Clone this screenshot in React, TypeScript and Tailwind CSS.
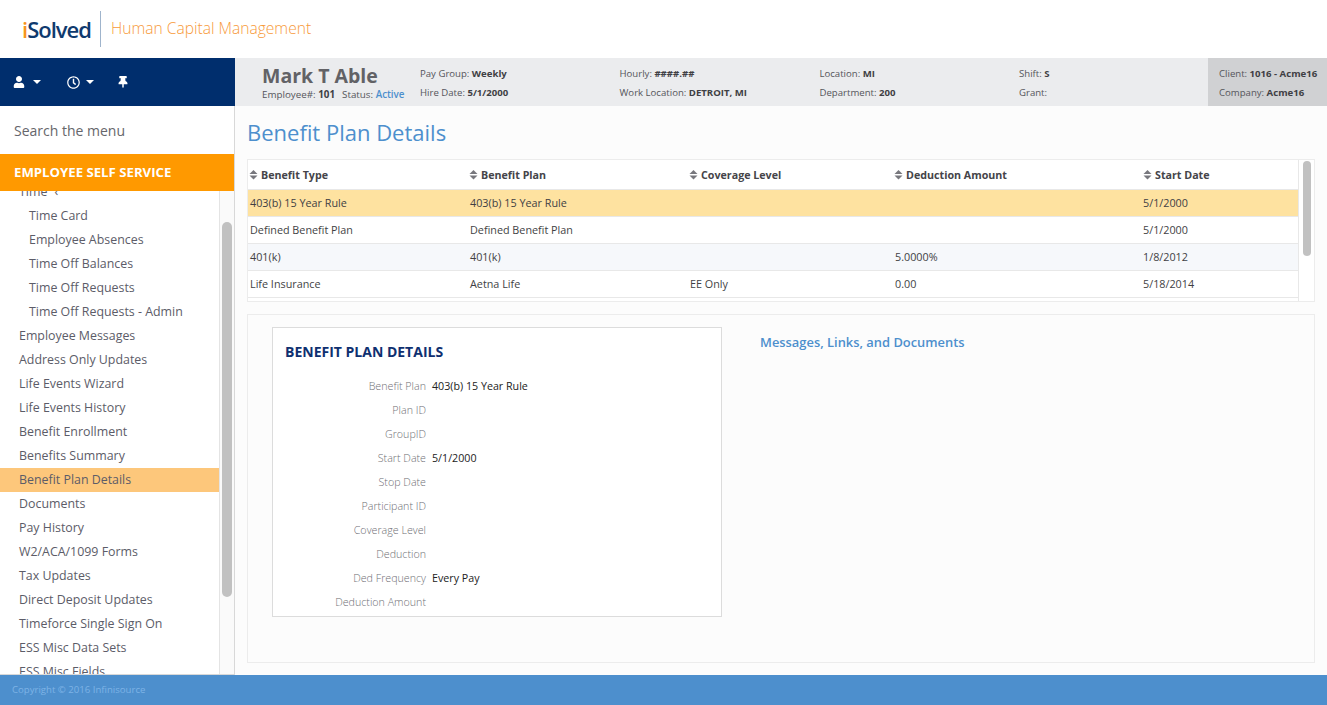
import { FaUser, FaRegClock, FaThumbtack } from "react-icons/fa";

function Caret() {
  return <span className="inline-block w-0 h-0 border-x-[4px] border-x-transparent border-t-[4px] border-t-white" />;
}

function Sort() {
  return (
    <svg width="9" height="10" viewBox="0 0 9 10" className="shrink-0 mr-[3px]">
      <path d="M4.5 0 L8.5 4 H0.5 Z M0.5 5.6 H8.5 L4.5 9.6 Z" fill="#77777d" />
    </svg>
  );
}

function Info({ label, value, className = "" }: { label: string; value?: string; className?: string }) {
  return (
    <div className={"text-[9.6px] leading-[19px] text-[#55555b] " + className}>
      {label}: <b className="font-bold text-[#3f3f44]">{value}</b>
    </div>
  );
}

const menu = [
  "Time Card",
  "Employee Absences",
  "Time Off Balances",
  "Time Off Requests",
  "Time Off Requests - Admin",
];
const menu2 = [
  "Employee Messages",
  "Address Only Updates",
  "Life Events Wizard",
  "Life Events History",
  "Benefit Enrollment",
  "Benefits Summary",
  "Benefit Plan Details",
  "Documents",
  "Pay History",
  "W2/ACA/1099 Forms",
  "Tax Updates",
  "Direct Deposit Updates",
  "Timeforce Single Sign On",
  "ESS Misc Data Sets",
  "ESS Misc Fields",
];

const cols = ["w-[220px]", "w-[220px]", "w-[205px]", "w-[248px]", "flex-1"];
const headers = ["Benefit Type", "Benefit Plan", "Coverage Level", "Deduction Amount", "Start Date"];
const rows = [
  { c: ["403(b) 15 Year Rule", "403(b) 15 Year Rule", "", "", "5/1/2000"], bg: "bg-[#fee2a0]" },
  { c: ["Defined Benefit Plan", "Defined Benefit Plan", "", "", "5/1/2000"], bg: "bg-white" },
  { c: ["401(k)", "401(k)", "", "5.0000%", "1/8/2012"], bg: "bg-[#f6f8fb]" },
  { c: ["Life Insurance", "Aetna Life", "EE Only", "0.00", "5/18/2014"], bg: "bg-white" },
];
const details = [
  ["Benefit Plan", "403(b) 15 Year Rule"],
  ["Plan ID", ""],
  ["GroupID", ""],
  ["Start Date", "5/1/2000"],
  ["Stop Date", ""],
  ["Participant ID", ""],
  ["Coverage Level", ""],
  ["Deduction", ""],
  ["Ded Frequency", "Every Pay"],
  ["Deduction Amount", ""],
];

export default function App() {
  return (
    <div className="w-[1327px] h-[705px] overflow-hidden flex flex-col bg-[#fcfcfc] font-['Open_Sans',sans-serif] text-[#333]">
      {/* Logo bar */}
      <header className="h-[58px] shrink-0 bg-white flex items-center pl-[22px]">
        <span className="relative w-[69px] text-[22px] font-semibold tracking-[-1px] text-[#0f3a6e] leading-none">
          <span className="text-[#f7941d]">i</span>Solved
        </span>
        <span className="w-px h-[36px] bg-[#9fb4cc] ml-[9px] mr-[10px]" />
        <span className="text-[15.6px] font-light text-[#f79a3a]">Human Capital Management</span>
      </header>

      {/* Employee bar */}
      <div className="h-[48px] shrink-0 flex">
        <div className="w-[235px] bg-[#002e6d] flex items-center pl-[13px] text-white">
          <FaUser size={12} />
          <span className="ml-[8px] mr-[26px] flex"><Caret /></span>
          <FaRegClock size={13} />
          <span className="ml-[6px] mr-[23px] flex"><Caret /></span>
          <FaThumbtack size={12} />
        </div>
        <div className="flex-1 bg-[#ebecee] flex">
          <div className="w-[185px] pl-[27px]">
            <div className="text-[19.5px] leading-[22px] mt-[7px] font-bold text-[#626266]">Mark T Able</div>
            <div className="text-[9.8px] leading-[14px] mt-[1px] text-[#55555b]">
              Employee#: <b className="text-[#3f3f44]">101</b>
              <span className="ml-[7px]">Status: </span>
              <b className="text-[#4d8fcd] font-semibold">Active</b>
            </div>
          </div>
          <div className="flex-1 flex pt-[6px]">
            <div className="w-[199.5px]">
              <Info label="Pay Group" value="Weekly" />
              <Info label="Hire Date" value="5/1/2000" />
            </div>
            <div className="w-[200px]">
              <Info label="Hourly" value="####.##" />
              <Info label="Work Location" value="DETROIT, MI" />
            </div>
            <div className="w-[199.5px]">
              <Info label="Location" value="MI" />
              <Info label="Department" value="200" />
            </div>
            <div className="flex-1">
              <Info label="Shift" value="S" />
              <Info label="Grant" />
            </div>
          </div>
          <div className="w-[119px] bg-[#d0d1d3] pl-[11px] pt-[6px]">
            <Info label="Client" value="1016 - Acme16" />
            <Info label="Company" value="Acme16" />
          </div>
        </div>
      </div>

      {/* Body */}
      <div className="flex-1 min-h-0 flex">
        <aside className="w-[235px] shrink-0 bg-white border-r border-r-[#d8d8d8] flex flex-col">
          <div className="h-[48px] shrink-0 flex items-center pl-[14px] text-[14px] text-[#66666b]">Search the menu</div>
          <div className="h-[37px] shrink-0 bg-[#ff9900] flex items-center pl-[14px] text-[13.2px] font-bold text-white">
            EMPLOYEE SELF SERVICE
          </div>
          <div className="relative flex-1 min-h-0 overflow-hidden border-b border-b-[#d8d8d8] bg-[#fafafa]">
            <div className="h-full w-[219px] bg-white border-r border-r-[#e4e4e4] -mt-[11px] pb-[11px] box-content text-[12.4px] leading-[24px] text-[#5c5c68]">
              <div className="pl-[19px] h-[24px] flex items-center">
                Time<span className="ml-[7px]">‹</span>
              </div>
              {menu.map((m) => (
                <div key={m} className="pl-[29px] h-[24px]">{m}</div>
              ))}
              {menu2.map((m) => (
                <div
                  key={m}
                  className={"pl-[19px] h-[24px] " + (m === "Benefit Plan Details" ? "bg-[#fdc77b]" : "")}
                >
                  {m}
                </div>
              ))}
            </div>
            <div className="absolute left-[222px] top-[31px] w-[10px] h-[375px] rounded-[5px] bg-[#c1c1c1]" />
          </div>
        </aside>

        <main className="flex-1 min-w-0 pl-[12px] pr-[12px]">
          <h1 className="text-[22px] leading-[30px] mt-[11px] text-[#4d8fcd]">Benefit Plan Details</h1>

          <section className="relative mt-[12px] h-[143px] border border-[#ececec] bg-white overflow-hidden">
            <div className="w-[1051px] text-[10.8px]">
              <div className="h-[30px] pt-[2px] flex items-center border-b border-b-[#e8e8e8] font-bold text-[#444449] text-[10.7px]">
                {headers.map((h, i) => (
                  <div key={h} className={cols[i] + " flex items-center " + (i === 4 ? "pl-[2px]" : "pl-[1px]")}>
                    <Sort />
                    {h}
                  </div>
                ))}
              </div>
              {rows.map((r) => (
                <div key={r.c[0]} className={r.bg + " h-[27px] flex items-center border-b border-b-[#e8e8e8] text-[#3f3f44]"}>
                  {r.c.map((t, i) => (
                    <div key={i} className={cols[i] + " pl-[2px]"}>{t}</div>
                  ))}
                </div>
              ))}
            </div>
            <div className="absolute right-[3px] top-[1px] w-[8px] h-[95px] rounded-[4px] bg-[#c1c1c1]" />
            <div className="absolute right-[15px] top-0 bottom-0 w-px bg-[#e8e8e8]" />
          </section>

          <section className="mt-[12px] h-[349px] border border-[#ececec] flex pl-[24px] pt-[12px] bg-[#fcfcfc]">
            <div className="w-[450px] h-[290px] border border-[#dcdcdc] bg-white">
              <h2 className="text-[14px] font-bold leading-[20px] mt-[14px] pl-[12px] text-[#0f3070]">BENEFIT PLAN DETAILS</h2>
              <div className="mt-[12px] text-[10.7px] leading-[24px]">
                {details.map(([l, v]) => (
                  <div key={l} className="flex h-[24px]">
                    <div className="w-[153px] text-right font-light text-[#6f6f75]">{l}</div>
                    <div className="pl-[6px] text-[#222]">{v}</div>
                  </div>
                ))}
              </div>
            </div>
            <div className="ml-[38px] mt-[5px] text-[12.9px] leading-[20px] font-semibold text-[#4d8fcd]">
              Messages, Links, and Documents
            </div>
          </section>
        </main>
      </div>

      <footer className="h-[30px] shrink-0 bg-[#4d8fcd] flex items-center pl-[12px] text-[9.6px] text-[#7db3e6]">
        Copyright © 2016 Infinisource
      </footer>
    </div>
  );
}
